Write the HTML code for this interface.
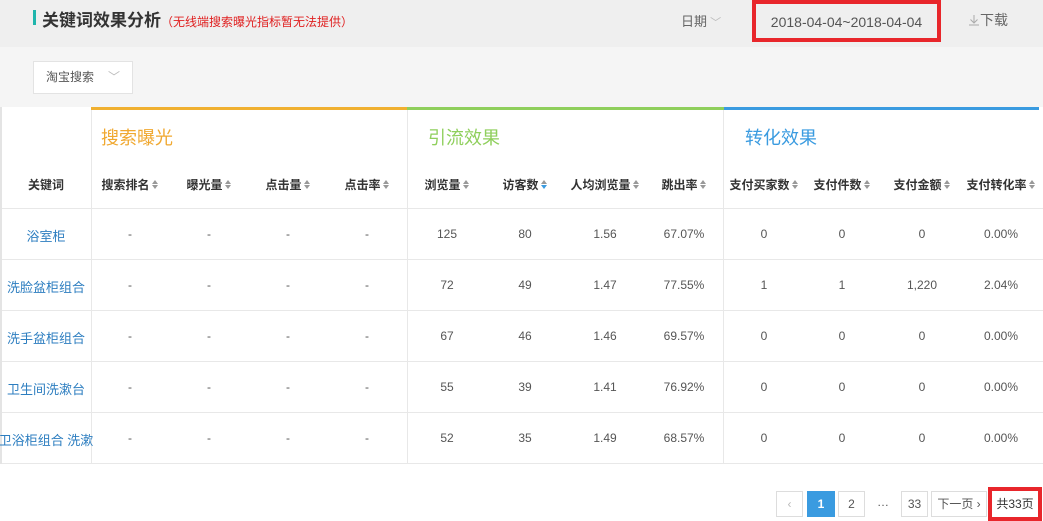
<!DOCTYPE html><html><head><meta charset="utf-8"><style>
*{margin:0;padding:0;box-sizing:border-box}
body{width:1043px;height:521px;overflow:hidden;background:#fff;font-family:"Liberation Sans","Noto Sans CJK SC",sans-serif;position:relative;color:#333}
.a{position:absolute}
.hd{left:0;top:0;width:1043px;height:47px;background:#efefef}
.sub{left:0;top:47px;width:1043px;height:60px;background:#f5f5f5}
.c{position:absolute;text-align:center;white-space:nowrap}
.h{font-size:12px;font-weight:bold;color:#333;top:176px}
.s{display:inline-block;width:7px;height:10px;vertical-align:-1px;margin-left:2px;position:relative}
.s:before{content:"";position:absolute;left:0;top:0;border:3.5px solid transparent;border-bottom:4px solid #999;border-top:0}
.s:after{content:"";position:absolute;left:0;top:5px;border:3.5px solid transparent;border-top:4px solid #999;border-bottom:0}
.sb:after{border-top-color:#3a9be0}
.d{font-size:12px;color:#555}
.k{font-size:13px;color:#2d7ec0}
.hl{position:absolute;left:2px;width:1041px;height:1px;background:#e8e8e8}
.vl{position:absolute;width:1px;background:#e8e8e8;top:110px;height:354px}
.pg{position:absolute;top:491px;height:26px;border:1px solid #ddd;font-size:12px;color:#555;text-align:center;line-height:24px;background:#fff}
</style></head><body>
<div class="a hd"></div><div class="a sub"></div>
<div class="a" style="left:33px;top:10px;width:3px;height:15px;background:#1fb5ac"></div>
<div class="a" style="left:42px;top:6px;font-size:17px;font-weight:bold;color:#333">关键词效果分析<span style="font-size:12px;font-weight:normal;color:#e02020">（无线端搜索曝光指标暂无法提供）</span></div>
<div class="a" style="left:681px;top:11px;font-size:13px;color:#666">日期<span style="color:#bbb;font-size:11px"> ﹀</span></div>
<div class="a" style="left:752px;top:0;width:189px;height:42px;border:4px solid #e8262b;background:#efefef;font-size:14px;color:#555;text-align:center;line-height:36px">2018-04-04~2018-04-04</div>
<div class="a" style="left:968px;top:10px;font-size:14px;color:#666"><svg width="12" height="12" style="vertical-align:-1px"><path d="M6 1v8M2.5 5.5L6 9l3.5-3.5M1 11h10" stroke="#aaa" fill="none"/></svg>下载</div>
<div class="a" style="left:33px;top:61px;width:100px;height:33px;background:#fff;border:1px solid #e3e3e3;font-size:12px;color:#555;line-height:31px;padding-left:12px">淘宝搜索<span style="color:#bbb;margin-left:14px">﹀</span></div>
<div class="a" style="left:0;top:107px;width:2px;height:357px;background:#e4e4e4"></div>
<div class="a" style="left:91px;top:107px;width:316px;height:3px;background:#f0b030"></div>
<div class="a" style="left:407px;top:107px;width:317px;height:3px;background:#8fcf5c"></div>
<div class="a" style="left:724px;top:107px;width:315px;height:3px;background:#3a9be0"></div>
<div class="a" style="left:101px;top:124px;font-size:18px;color:#f0a830">搜索曝光</div>
<div class="a" style="left:428px;top:124px;font-size:18px;color:#8fcf5c">引流效果</div>
<div class="a" style="left:745px;top:124px;font-size:18px;color:#3a9be0">转化效果</div>
<div class="vl" style="left:91px"></div><div class="vl" style="left:407px"></div><div class="vl" style="left:723px"></div>
<div class="hl" style="top:208px"></div><div class="hl" style="top:259px"></div><div class="hl" style="top:310px"></div><div class="hl" style="top:361px"></div><div class="hl" style="top:412px"></div><div class="hl" style="top:463px"></div>
<div id="g"></div>
<script>
var cx=[46,130,209,288,367,447,525,605,684,764,842,922,1001];
var hd=["关键词","搜索排名","曝光量","点击量","点击率","浏览量","访客数","人均浏览量","跳出率","支付买家数","支付件数","支付金额","支付转化率"];
var rows=[["浴室柜","125","80","1.56","67.07%","0","0","0","0.00%"],["洗脸盆柜组合","72","49","1.47","77.55%","1","1","1,220","2.04%"],["洗手盆柜组合","67","46","1.46","69.57%","0","0","0","0.00%"],["卫生间洗漱台","55","39","1.41","76.92%","0","0","0","0.00%"],["卫浴柜组合 洗漱","52","35","1.49","68.57%","0","0","0","0.00%"]];
var h="";
hd.forEach(function(t,i){h+='<div class="c h" style="left:'+(cx[i]-60)+'px;width:120px">'+t+(i?'<span class="s'+(i==6?' sb':'')+'"></span>':'')+'</div>';});
rows.forEach(function(r,j){var y=227+j*51;
 var v=[r[0],"-","-","-","-"].concat(r.slice(1));
 v.forEach(function(t,i){h+='<div class="c '+(i?'d':'k')+'" style="top:'+(i?y:y-1)+'px;left:'+(cx[i]-60)+'px;width:120px'+(i==0?';left:-14px':'')+'">'+t+'</div>';});});
document.getElementById("g").innerHTML=h;
</script>
<div class="pg" style="left:776px;width:27px;color:#bbb">‹</div>
<div class="pg" style="left:807px;width:28px;background:#3a9be0;border-color:#3a9be0;color:#fff;font-weight:bold">1</div>
<div class="pg" style="left:838px;width:27px">2</div>
<div class="a" style="left:877px;top:495px;font-size:12px;color:#555">…</div>
<div class="pg" style="left:901px;width:27px">33</div>
<div class="pg" style="left:931px;width:56px">下一页 ›</div>
<div class="a" style="left:988px;top:487px;width:54px;height:34px;background:#e8262b;padding:4px"><div style="background:#fff;height:26px;font-size:12px;color:#333;line-height:26px;text-align:center">共33页</div></div>
</body></html>
